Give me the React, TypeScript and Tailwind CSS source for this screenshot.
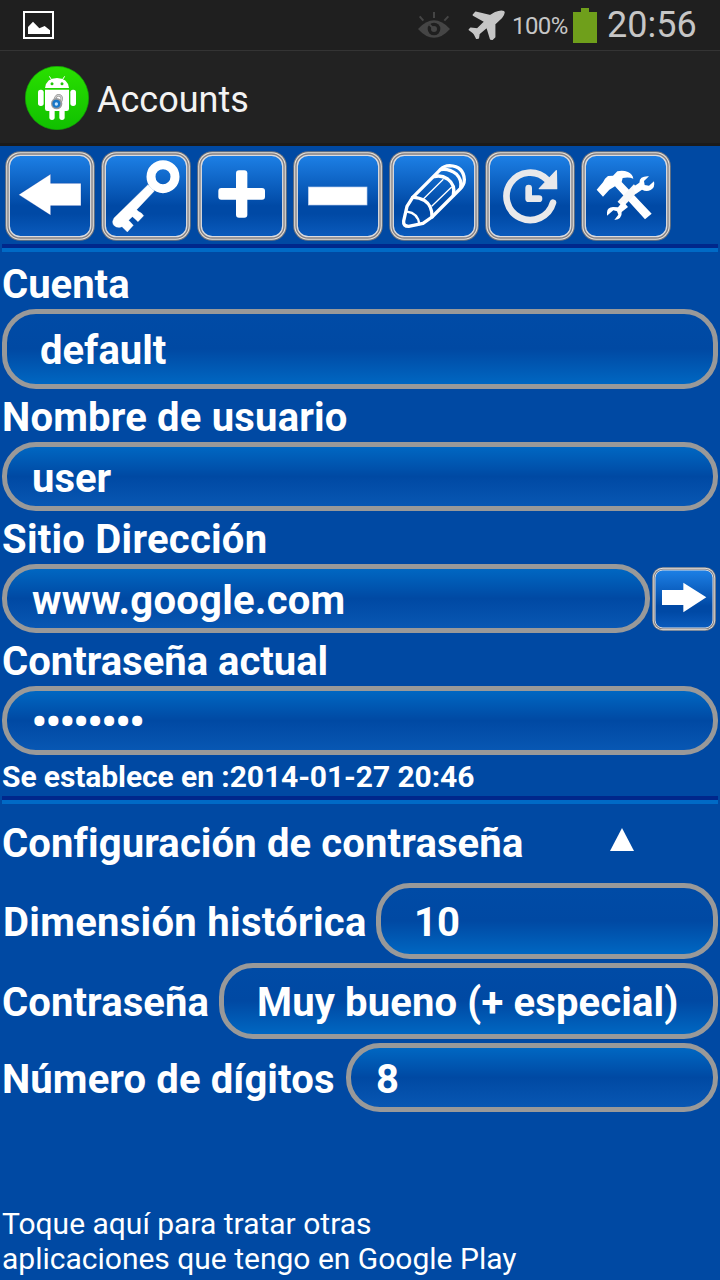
import type { ReactNode } from "react";

const FONT = "font-['Roboto',sans-serif]";

function GlossyButton({ id, size, viewBox, children }: { id: string; size: string; viewBox: string; children: ReactNode }) {
  return (
    <button className={`relative block shrink-0 ${size}`} aria-label={id}>
      <svg viewBox="0 0 90 90" className="block h-full w-full">
        <defs>
          <linearGradient id={`${id}-fill`} x1="0" y1="0" x2="0" y2="1">
            <stop offset="0" stopColor="#1d80e6" />
            <stop offset="0.62" stopColor="#0049a5" />
            <stop offset="0.72" stopColor="#0049a5" />
            <stop offset="1" stopColor="#0a5bbd" />
          </linearGradient>
        </defs>
        <rect x="0.2" y="0.2" width="89.6" height="89.6" rx="15" fill="#77797e" />
        <rect x="1.2" y="1.2" width="87.6" height="87.6" rx="14" fill="#e4e1dd" />
        <rect x="2.3" y="2.3" width="85.4" height="85.4" rx="13" fill="#838083" />
        <rect x="4.3" y="4.3" width="81.4" height="81.4" rx="11" fill={`url(#${id}-fill)`} stroke="#dcdcdf" strokeWidth="1.3" />
        <svg x="0" y="0" width="90" height="90" viewBox={viewBox}>
          {children}
        </svg>
      </svg>
    </button>
  );
}

function Divider() {
  return (
    <div className="mx-[2px] h-2 shrink-0 bg-[#006ac6]">
      <div className="h-1 bg-[#00278b]" />
    </div>
  );
}

function Label({ className, children }: { className: string; children: ReactNode }) {
  return <div className={`flex shrink-0 items-center whitespace-pre text-[40px] leading-none font-bold ${className}`}>{children}</div>;
}

function Field({ kind, className, children }: { kind: "select" | "input"; className: string; children: ReactNode }) {
  const fill =
    kind === "select"
      ? "bg-[linear-gradient(180deg,#004ba6_0%,#0049a3_50%,#0067c2_100%)]"
      : "bg-[linear-gradient(180deg,#0067c2_0%,#0049a3_50%,#0857b3_100%)]";
  return (
    <div className={`flex items-center rounded-[34px] border-[5px] border-[#999] bg-origin-padding leading-none font-bold whitespace-pre ${fill} ${className}`}>
      {children}
    </div>
  );
}

function StatusBar() {
  return (
    <div className="flex h-[51px] shrink-0 items-start border-b border-[#343434] bg-[#1f1f1f] text-[#c6c6c6]">
      <svg className="mt-[11px] ml-[23px] h-7 w-[31px]" viewBox="69 33 93 84">
        <rect x="72" y="36" width="87" height="78" fill="none" stroke="#fff" strokeWidth="6" />
        <path d="M84 102V81L99 65L118 85L134 78L150 91V102Z" fill="#fff" />
      </svg>
      <svg className="mt-3 ml-[364px] h-[27px] w-8" viewBox="18 18 96 81">
        <path d="M18 69Q66 17 114 69Q66 122 18 69Z" fill="#454545" />
        <circle cx="66" cy="69" r="19" fill="#1f1f1f" />
        <circle cx="66" cy="69" r="9" fill="#454545" />
        <path d="M52 55L66 69" stroke="#454545" strokeWidth="6" />
        <path d="M66 18V36M23 31L34 44M109 31L97 44" stroke="#454545" strokeWidth="6" />
      </svg>
      <svg className="mt-[10px] ml-[18px] h-[31px] w-[38px]" viewBox="168 12 114 93">
        <path
          d="M275 17Q267 13 250 20L235 29L191 19L184 27L219 47L196 69L176 67L172 71L184 80L188 85L194 97L199 96L201 83L225 63L236 99L241 100L248 93L248 54L268 35Q279 21 275 17Z"
          fill="#c6c6c6"
          stroke="#c6c6c6"
          strokeWidth="4.5"
          strokeLinejoin="round"
        />
      </svg>
      <span className="mt-[12px] ml-[6px] w-[60px] text-[24px] leading-7 tracking-[-0.6px] whitespace-nowrap">100%</span>
      <div className="mt-2 ml-[1px] flex w-6 flex-col items-center">
        <div className="h-1 w-2 bg-[#6f9f1b]" />
        <div className="h-[31px] w-6 bg-[#6f9f1b]" />
      </div>
      <span className="mt-[5px] ml-[10px] text-[36px] leading-10 whitespace-nowrap">20:56</span>
    </div>
  );
}

function ActionBar() {
  return (
    <div className="flex h-[95px] shrink-0 items-start border-b-[3px] border-[#1b1b1b] bg-[#222]">
      <svg className="mt-[15px] ml-[25px] h-16 w-16" viewBox="75 198 192 192">
        <defs>
          <linearGradient id="badge" x1="0" y1="0" x2="0" y2="1">
            <stop offset="0" stopColor="#2ae000" />
            <stop offset="1" stopColor="#10c000" />
          </linearGradient>
        </defs>
        <circle cx="171" cy="294" r="95" fill="url(#badge)" stroke="#12a505" strokeWidth="2" />
        <g fill="#fff">
          <path d="M135 264Q139 234 171 234Q203 234 207 264Z" />
          <path d="M135 269H207V326Q207 333 200 333H142Q135 333 135 326Z" />
          <rect x="114" y="269" width="17" height="49" rx="8" />
          <rect x="211" y="269" width="17" height="49" rx="8" />
          <rect x="148" y="320" width="16" height="40" rx="8" />
          <rect x="178" y="320" width="16" height="40" rx="8" />
        </g>
        <path d="M148 229L156 241M194 229L186 241" stroke="#fff" strokeWidth="3" />
        <circle cx="156" cy="251" r="4.5" fill="#22c60a" />
        <circle cx="186" cy="251" r="4.5" fill="#22c60a" />
        <path d="M163 300L168 290Q175 282 183 289Q188 295 182 307" fill="none" stroke="#888" strokeWidth="7" />
        <path d="M163 300L168 290Q175 282 183 289Q188 295 182 307" fill="none" stroke="#ccc" strokeWidth="4" />
        <circle cx="170" cy="311" r="17" fill="#9b9b9b" />
        <circle cx="169" cy="311" r="12" fill="#1676c8" />
        <circle cx="169" cy="312" r="5" fill="#c5e6ff" />
      </svg>
      <span className="mt-[29px] ml-[8px] text-[36px] leading-10 text-[#f3f3f3]">Accounts</span>
    </div>
  );
}

function Toolbar() {
  return (
    <div className="flex h-[98px] shrink-0 gap-[6px] pt-[5px] pl-[5px]">
      <GlossyButton id="back" size="h-[90px] w-[90px]" viewBox="15 18 270 270">
        <path d="M56 149L152 87V115H243V182H152V211Z" fill="#fff" stroke="#0038a0" strokeWidth="1" />
      </GlossyButton>
      <GlossyButton id="key" size="h-[90px] w-[90px]" viewBox="303 18 270 270">
        <circle cx="489" cy="95" r="36" fill="none" stroke="#fff" strokeWidth="27" />
        <path
          d="M444 119L463 138L410 194L415 199Q420 203 424 204L431 212L414 230L402 219L397 215L386 226L400 241L382 261L366 245Q359 249 349 246Q337 241 338 229L342 219Z"
          fill="#fff"
          stroke="#fff"
          strokeWidth="1"
          strokeLinejoin="round"
        />
      </GlossyButton>
      <GlossyButton id="add" size="h-[90px] w-[90px]" viewBox="21 18 270 270">
        <rect x="138" y="76" width="34" height="142" rx="9" fill="#fff" />
        <rect x="85" y="129" width="140" height="35" rx="9" fill="#fff" />
      </GlossyButton>
      <GlossyButton id="remove" size="h-[90px] w-[90px]" viewBox="309 18 270 270">
        <rect x="355" y="126" width="176" height="54" fill="#fff" stroke="#b6cdee" strokeWidth="2" />
      </GlossyButton>
      <GlossyButton id="edit" size="h-[90px] w-[90px]" viewBox="27 18 270 270">
        <g fill="none" stroke="#fff" strokeWidth="10" strokeLinejoin="round" strokeLinecap="round">
          <path d="M98 157L181 74Q192 62 209 62Q251 64 253 104Q253 119 240 132L156 216L129 235L86 244Q69 244 71 228L81 184Z" />
          <path d="M98 157Q115 156 134 167Q157 182 156 216" />
          <path d="M163 95Q183 89 203 102Q227 120 220 150" />
          <path d="M181 74Q207 69 230 88Q246 104 242 128" />
          <path d="M81 200Q113 204 118 237" strokeWidth="7" />
        </g>
        <path d="M130 162L190 103M155 184L215 126" stroke="#fff" strokeWidth="4" />
      </GlossyButton>
      <GlossyButton id="history" size="h-[90px] w-[90px]" viewBox="315 18 270 270">
        <path d="M501 104A71 71 0 1 0 519 173" fill="none" stroke="#e9e9eb" strokeWidth="20" strokeLinecap="round" />
        <path d="M529 77L530 131H478Z" fill="#e9e9eb" stroke="#e9e9eb" strokeWidth="4" strokeLinejoin="round" />
        <path d="M446 129V161H477" fill="none" stroke="#e9e9eb" strokeWidth="20" strokeLinecap="round" strokeLinejoin="round" />
      </GlossyButton>
      <GlossyButton id="tools" size="h-[90px] w-[90px]" viewBox="33 18 270 270">
        <path d="M80 134L99 112L105 101L114 93L129 92L142 79Q159 75 174 81Q188 87 190 101Q176 95 158 99L155 111L245 206L225 223L135 124L118 134L99 155Z" fill="#fff" />
        <path d="M200 126L151 178" stroke="#f8f8f8" strokeWidth="23" />
        <path d="M237 94L222 108L224 120L237 122L252 109Q256 128 242 135Q229 141 216 134L197 147L188 127L208 113Q209 92 237 94Z" fill="#fff" />
        <path d="M111 202Q112 187 129 186L144 187L159 169L174 186L155 201Q157 222 133 225L145 209L141 199L130 196L111 212Z" fill="#fff" />
      </GlossyButton>
    </div>
  );
}

export default function App() {
  return (
    <div className={`flex h-[1280px] w-[720px] flex-col overflow-hidden bg-[#0049a3] text-white ${FONT}`}>
      <StatusBar />
      <ActionBar />
      <Toolbar />
      <Divider />

      <Label className="h-[57px] pt-[9px] pl-[2px]">Cuenta</Label>
      <Field kind="select" className="mx-[2px] h-20 shrink-0 pt-[3px] pl-[33px] text-[40px]">default</Field>
      <Label className="h-[53px] pt-[4px] pl-[2px] tracking-[0.19px]">Nombre de usuario</Label>
      <Field kind="input" className="mx-[2px] h-[69px] shrink-0 pt-[4px] pl-[25px] text-[40px]">user</Field>
      <Label className="h-[53px] pt-[4px] pl-[2px] tracking-[0.25px]">Sitio Dirección</Label>
      <div className="flex h-[69px] shrink-0 items-center gap-[2px] pl-[2px]">
        <Field kind="input" className="h-[69px] w-[648px] pt-[4px] pl-[25px] text-[40px] tracking-[0.25px]">www.google.com</Field>
        <GlossyButton id="open" size="h-16 w-16" viewBox="276 51 192 192">
          <path d="M306 120H370V98L439 142L370 187V165H306Z" fill="#fff" />
        </GlossyButton>
      </div>
      <Label className="h-[53px] pt-[4px] pl-[2px]">Contraseña actual</Label>
      <Field kind="input" className="mx-[2px] h-[69px] shrink-0 pt-[4px] pl-[24.5px] text-[43px] tracking-[-1.5px]">••••••••</Field>
      <div className="flex h-[41px] shrink-0 items-center pt-[3px] pl-[2px] text-[30px] leading-none font-bold tracking-[-0.09px] whitespace-pre">
        Se establece en :2014-01-27 20:46
      </div>
      <Divider />

      <div className="flex h-[79px] shrink-0 items-center">
        <Label className="w-[609px] pl-[2px] tracking-[0.13px]">Configuración de contraseña</Label>
        <svg className="mb-2 h-6 w-[26px]" viewBox="0 0 26 24">
          <path d="M13 0L25 23H1Z" fill="#fff" />
        </svg>
      </div>
      <div className="flex h-[76px] shrink-0 pr-[2px]">
        <Label className="w-[376px] pt-[4px] pl-[3px] tracking-[0.3px]">Dimensión histórica</Label>
        <Field kind="select" className="flex-1 pt-[4px] pl-[33px] text-[40px]">10</Field>
      </div>
      <div className="mt-1 flex h-[76px] shrink-0 pr-[2px]">
        <Label className="w-[219px] pt-[4px] pl-[2px] tracking-[0.1px]">Contraseña</Label>
        <Field kind="select" className="flex-1 pt-[4px] pl-[33px] text-[40px] tracking-[0.14px]">Muy bueno (+ especial)</Field>
      </div>
      <div className="mt-1 flex h-[69px] shrink-0 pr-[2px]">
        <Label className="w-[346px] pt-[4px] pl-[2px] tracking-[0.12px]">Número de dígitos</Label>
        <Field kind="input" className="flex-1 pt-[4px] pl-[25px] text-[40px]">8</Field>
      </div>

      <p className="mt-auto mb-[4px] pl-[2px] text-[30px] leading-[35px]">
        Toque aquí para tratar otras
        <br />
        aplicaciones que tengo en Google Play
      </p>
    </div>
  );
}
